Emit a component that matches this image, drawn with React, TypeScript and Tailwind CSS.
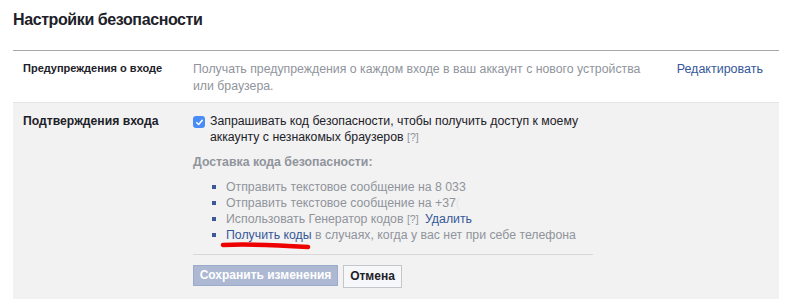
import React from 'react';

const Bullet: React.FC<{ children: React.ReactNode }> = ({ children }) => (
  <li className="flex items-center h-[16px]">
    <span className="w-[4px] h-[4px] bg-[#3b5998] mr-[10px] ml-[19px] shrink-0" />
    <span className="text-[#90949c] whitespace-nowrap">{children}</span>
  </li>
);

export default function App() {
  return (
    <div className="w-[792px] h-[306px] bg-white text-[#1d2129] font-['Liberation_Sans',Arial,sans-serif] overflow-hidden">
      {/* Title */}
      <h1 className="pl-[13px] pt-[8px] h-[50px] text-[16px] tracking-[-0.4px] leading-[24px] font-bold text-[#1d2129]">
        Настройки безопасности
      </h1>

      <div className="mx-[13px] border-t border-[#a7a7a7]">
        {/* Row 1: login alerts */}
        <div className="flex h-[52px] border-b border-[#e5e5e5] pt-[9px]">
          <div className="w-[180px] pl-[10px] text-[11px] leading-[16px] font-bold">
            Предупреждения о входе
          </div>
          <div className="w-[460px] text-[12.3px] leading-[17px] text-[#90949c] pt-[1px]">
            Получать предупреждения о каждом входе в ваш аккаунт с нового устройства или браузера.
          </div>
          <a className="ml-auto pr-[16px] text-[12.5px] leading-[17px] text-[#365899] pt-[1px]">
            Редактировать
          </a>
        </div>

        {/* Row 2: login approvals */}
        <div className="flex bg-[#f2f2f2] h-[196px] pt-[10px]">
          <div className="w-[180px] pl-[10px] text-[12.2px] leading-[16px] font-bold">
            Подтверждения входа
          </div>
          <div className="text-[12.3px] leading-[16px]">
            <div className="flex">
              <span className="mt-[3px] w-[12px] h-[12px] rounded-[3px] bg-[#4a8cf7] flex items-center justify-center shrink-0">
                <svg width="9" height="9" viewBox="0 0 10 10">
                  <path d="M2 5.2 L4.1 7.3 L8 2.6" fill="none" stroke="#fff" strokeWidth="1.7" strokeLinecap="round" strokeLinejoin="round" />
                </svg>
              </span>
              <p className="ml-[5px] w-[380px] text-[#1d2129]">
                Запрашивать код безопасности, чтобы получить доступ к моему аккаунту с незнакомых браузеров{' '}
                <span className="text-[10.5px] leading-[16px] text-[#90949c]">[?]</span>
              </p>
            </div>

            <div className="mt-[9px] font-bold text-[#90949c]">Доставка кода безопасности:</div>

            <ul className="mt-[9px] relative">
              <Bullet>Отправить текстовое сообщение на 8 033</Bullet>
              <Bullet>
                Отправить текстовое сообщение на +37<span className="text-[#e6e6e6]">(</span>
              </Bullet>
              <Bullet>
                Использовать Генератор кодов <span className="text-[10.5px]">[?]</span>{' '}
                <a className="ml-[3px] text-[#365899]">Удалить</a>
              </Bullet>
              <Bullet>
                <a className="text-[#365899]">Получить коды</a> в случаях, когда у вас нет при себе телефона
              </Bullet>
              <svg className="absolute left-[27px] top-[61px]" width="94" height="12" viewBox="0 0 94 12">
                <path d="M3 5 C 25 4, 55 5, 88 7" fill="none" stroke="#ee0000" strokeWidth="4.5" strokeLinecap="round" />
              </svg>
            </ul>

            <div className="mt-[11px] w-[400px] border-t border-[#d8d8d8]" />

            <div className="mt-[10px] flex items-start gap-[5px]">
              <button className="h-[21px] w-[145px] bg-[#adb9d3] border border-[#9cabcb] text-white text-[12px] font-bold leading-[19px]">
                Сохранить изменения
              </button>
              <button className="h-[23px] w-[59px] bg-[#f6f7f9] border border-[#c4c6ca] text-[#1d2129] text-[12px] font-bold leading-[21px]">
                Отмена
              </button>
            </div>
          </div>
        </div>
      </div>
    </div>
  );
}
